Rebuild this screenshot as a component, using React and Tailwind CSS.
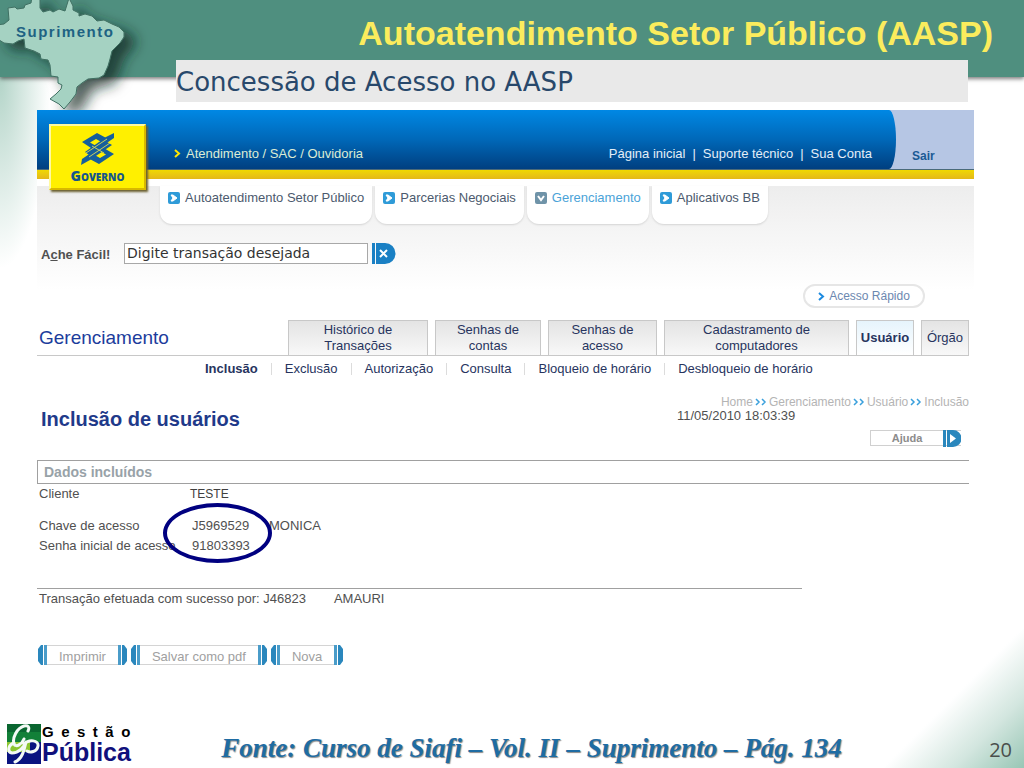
import { useState } from 'react';

const mainTabs = [
  { label: 'Autoatendimento Setor Público' },
  { label: 'Parcerias Negociais' },
  { label: 'Gerenciamento', active: true },
  { label: 'Aplicativos BB' },
];

const sectionTabs = [
  { label: 'Histórico de Transações', box: 'px-7' },
  { label: 'Senhas de contas', box: 'px-4' },
  { label: 'Senhas de acesso', box: 'px-4' },
  { label: 'Cadastramento de computadores', box: 'px-9' },
  { label: 'Usuário', box: 'px-0', active: true },
  { label: 'Órgão', box: 'px-0' },
];

const subMenu = ['Inclusão', 'Exclusão', 'Autorização', 'Consulta', 'Bloqueio de horário', 'Desbloqueio de horário'];

const breadcrumb = ['Home', 'Gerenciamento', 'Usuário', 'Inclusão'];

const actions = ['Imprimir', 'Salvar como pdf', 'Nova'];

function BrazilMap() {
  return (
    <svg width="170" height="112" viewBox="0 0 170 112" aria-hidden="true">
      <defs>
        <filter id="mapShadow" x="-20%" y="-20%" width="160%" height="150%">
          <feDropShadow dx="11" dy="7" stdDeviation="7" floodColor="#0c2620" floodOpacity="0.75" />
        </filter>
      </defs>
      <path
        d="M-4 25 L4 24 L9 20 L8 8 L15 7 L17 9 L24 8 L25 5 L31 3 L32 -4 L40 -4 L40 8 L43 12 L50 10 L53 12 L59 9 L65 11 L69 -2 L73 6 L73 10 L79 13 L79 16 L85 14 L92 16 L97 21 L104 20 L112 24 L119 27 L124 32 L124 37 L120 43 L112 51 L110 59 L108 66 L104 75 L99 78 L88 79 L82 83 L77 87 L76 94 L70 102 L64 109 L59 104 L50 99 L56 94 L61 89 L62 85 L58 83 L58 77 L51 76 L50 65 L48 60 L41 59 L40 54 L34 51 L25 48 L24 39 L18 41 L13 44 L4 43 L-4 38 Z"
        fill="#a5d2c2"
        stroke="#3f6f62"
        strokeWidth="1"
        filter="url(#mapShadow)"
      />
    </svg>
  );
}

function BankMark() {
  return (
    <svg width="36" height="34" viewBox="0 0 36 34" aria-hidden="true">
      <g fill="#155f9c">
        <path d="M2 10 L17 1 L30 8 L25 12 L16 7 L10 10.500 L18 15 L14 18 Z" />
        <path d="M34 1 L34 6 L9 23 L5 20 L26 5 Z" />
        <path d="M34 22 L19 32 L6 25 L11 21 L20 26 L26 22.500 L18 18 L22 15 Z" />
        <path d="M1 33 L2 27 L27 10 L32 13 L10 28 Z" />
      </g>
      <path d="M6 21 L27 7 M9 25 L30 11 M12 14 L24 21" stroke="#c8d060" strokeWidth="1" />
    </svg>
  );
}

function PublicManagementMark() {
  return (
    <svg width="34" height="40" viewBox="0 0 34 40" aria-hidden="true">
      <rect width="34" height="40" fill="#0a1480" />
      <path d="M0 0H34V18H0Z" fill="#128038" />
      <path d="M0 0H34V8H0Z" fill="#0a6630" />
      <path d="M0 18H23V28H0Z" fill="#8cc630" />
      <path
        d="M21 7C23 3 21 1 17 2C10 4 5 14 7 20C9 24 15 20 17 15M7 19C1 21 0 28 5 29C12 29 17 23 19 18M19 18C17 27 15 35 8 38M17 20C22 15 32 16 31 22C30 28 23 29 20 27"
        fill="none"
        stroke="#f4faf6"
        strokeWidth="3"
        strokeLinecap="round"
      />
    </svg>
  );
}

function TabBullet({ active }) {
  return (
    <svg width="12" height="12" viewBox="0 0 12 12" aria-hidden="true">
      <rect width="12" height="12" rx="2" fill={active ? '#6f93a8' : '#2f9bd8'} />
      {active ? (
        <path d="M3 4L6 8L9 4" fill="none" stroke="#fff" strokeWidth="2" />
      ) : (
        <path d="M3 3H5L9 6L5 9H3L5 6Z" fill="#fff" stroke="#fff" strokeWidth="1" />
      )}
    </svg>
  );
}

function Chevron({ color }) {
  return (
    <svg width="7" height="9" viewBox="0 0 7 9" aria-hidden="true">
      <path d="M1 1L5 4.500L1 8" fill="none" stroke={color} strokeWidth="2" />
    </svg>
  );
}

function DoubleChevron() {
  return (
    <svg width="12" height="8" viewBox="0 0 12 8" aria-hidden="true">
      <path d="M1 1L4 4L1 7M7 1L10 4L7 7" fill="none" stroke="#3aa0dc" strokeWidth="1.500" />
    </svg>
  );
}

function ButtonCap({ flip }) {
  return (
    <svg width="9" height="20" viewBox="0 0 9 20" className={flip ? 'rotate-180' : ''} aria-hidden="true">
      <path d="M5 0V20H3L0 16V4L3 0Z" fill="#2a87bd" />
      <path d="M6 0H9V20H6Z" fill="#4a9cc9" />
    </svg>
  );
}

function App() {
  const [search, setSearch] = useState('Digite transação desejada');

  return (
    <div className="relative flex min-h-screen flex-col overflow-hidden bg-white bg-[radial-gradient(ellipse_50px_190px_at_0_78px,#b3d4c8,transparent),linear-gradient(315deg,#98c6b5_0,#d3e6df_50px,#ffffff_100px)] font-['Liberation_Sans',Arial,sans-serif] text-[13px]">
      {/* Slide header */}
      <header className="flex h-[77px] shrink-0 justify-end bg-[#4f8f7f] pt-3 pr-[31px] shadow-[0_2px_4px_#00000080]">
        <h1 className="text-[34px] leading-[42px] font-bold text-[#fbec5d]">Autoatendimento Setor Público (AASP)</h1>
      </header>
      <div className="absolute top-0 left-0">
        <BrazilMap />
        <p className="absolute top-6 left-4 text-[15px] leading-4 font-bold tracking-widest text-[#1e6283]">Suprimento</p>
      </div>
      <h2 className="relative mr-14 ml-44 -mt-[17px] bg-[#e9e9e9] pt-0.5 font-['DejaVu_Sans',Verdana,sans-serif] text-[26px] leading-10 text-[#28486b]">
        Concessão de Acesso no AASP
      </h2>

      <main className="relative mt-2 mr-[50px] ml-[37px] bg-white text-[#505050]">
        {/* Bank banner */}
        <div className="relative">
          <div className="flex h-[60px] border-b border-[#4a6a7a] bg-[#b6c6e4]">
            <div className="flex grow items-center justify-between bg-linear-to-b from-[#0088e4] via-[#0068b8] to-[#003f80] pt-7 pr-6 pl-[137px] text-[#e4eef8] [border-radius:0_7px_7px_0/0_50%_50%_0]">
              <a href="#atendimento" className="flex items-center gap-[5px] text-[#dcecd4]">
                <Chevron color="#ffe600" />
                Atendimento / SAC / Ouvidoria
              </a>
              <nav className="flex gap-[7px]">
                <a href="#inicio">Página inicial</a>
                <span>|</span>
                <a href="#suporte">Suporte técnico</a>
                <span>|</span>
                <a href="#conta">Sua Conta</a>
              </nav>
            </div>
            <a href="#sair" className="w-[78px] pt-9 pl-4 text-[12px] leading-5 font-bold text-[#1a5a94]">Sair</a>
          </div>
          <div className="h-[9px] bg-linear-to-b from-[#f0d800] to-[#e4b818]" />
          <div className="absolute top-3.5 left-3 flex h-[66px] w-[97px] flex-col items-center gap-0.5 border-2 border-[#fff9a0] border-r-[#d8b800] border-b-[#d8b800] bg-[#fff000] pt-1.5 shadow-[2px_2px_2px_#6b6030]">
            <BankMark />
            <p className="font-['Open_Sans',sans-serif] text-[14px] leading-4 font-extrabold text-[#14568c] [font-variant:small-caps]">Governo</p>
          </div>
        </div>

        {/* Main tabs and search */}
        <div className="mt-[7px] bg-linear-to-b from-[#ededed] to-white to-[104px]">
          <nav className="flex gap-[3px] pl-[123px]">
            {mainTabs.map((tab) => (
              <a
                key={tab.label}
                href="#menu"
                className={`flex h-[38px] items-start gap-[5px] rounded-b-xl bg-white px-2 pt-1.5 leading-3 shadow-[0_1px_2px_#d4d4d4] ${tab.active ? 'text-[#4ba3d8]' : 'text-[#4c5a6e]'}`}
              >
                <TabBullet active={tab.active} />
                {tab.label}
              </a>
            ))}
          </nav>

          <form className="mt-[18px] flex h-[22px] items-center pl-1" onSubmit={(event) => event.preventDefault()}>
            <label htmlFor="busca" className="w-[83px] pt-1 font-bold">
              A<u>c</u>he Fácil!
            </label>
            <input
              id="busca"
              type="text"
              value={search}
              onChange={(event) => setSearch(event.target.value)}
              className="h-[21px] w-[244px] border border-[#a8a8a8] bg-white px-0.5 font-['DejaVu_Sans',Verdana,sans-serif] text-[14px] text-[#333333]"
            />
            <button type="submit" aria-label="Buscar" className="ml-1">
              <svg width="24" height="21" viewBox="0 0 24 21" aria-hidden="true">
                <path d="M0 0H3V21H0ZM4 0H13A10.500 10.500 0 0 1 13 21H4Z" fill="#1a80c4" />
                <path d="M8 7L15 14M15 7L8 14" stroke="#fff" strokeWidth="2" />
              </svg>
            </button>
          </form>

          <div className="mt-5 flex justify-end pr-[49px]">
            <button type="button" className="flex h-6 w-[122px] items-center justify-center gap-1 rounded-full border-2 border-[#e6e6e6] bg-white text-[12px] text-[#6c88b0]">
              <Chevron color="#1c8ae0" />
              Acesso Rápido
            </button>
          </div>
        </div>

        {/* Section tabs */}
        <div className="mt-3 mr-[5px] grid grid-cols-[244fr_140fr_106fr_109fr_185fr_58fr_48fr] gap-x-[7px] border-b border-[#c8c8c8] text-[#27345e]">
          <h2 className="pt-1 pl-0.5 text-[19px] leading-7 text-[#1c3c9c]">Gerenciamento</h2>
          {sectionTabs.map((tab) => (
            <a
              key={tab.label}
              href="#secao"
              className={`flex h-[35px] items-center justify-center border border-b-0 border-[#c8c8c8] text-center leading-4 ${tab.box} ${tab.active ? '-mb-px h-9 bg-linear-to-b from-[#e6f4fc] to-white font-bold' : 'bg-linear-to-b from-[#e4e4e4] to-[#f8f8f8]'}`}
            >
              {tab.label}
            </a>
          ))}
        </div>
        <ul className="flex h-[25px] items-center pl-[155px] text-[#27345e]">
          {subMenu.map((item, index) => (
            <li key={item} className={`px-[13px] leading-3 ${index === 0 ? 'font-bold' : 'border-l border-[#dcdcdc]'}`}>
              <a href="#submenu">{item}</a>
            </li>
          ))}
        </ul>

        {/* Page title, breadcrumb and help */}
        <section className="mr-[5px] flex justify-between pt-3.5">
          <h3 className="pt-2.5 pl-1 text-[20px] leading-7 font-bold text-[#1f3a8a]">Inclusão de usuários</h3>
          <div className="w-[292px] leading-[14px]">
            <ol className="flex items-center justify-end gap-0.5 text-[#b4b4b4]">
              {breadcrumb.map((item, index) => (
                <li key={item} className="flex items-center gap-0.5">
                  {index > 0 && <DoubleChevron />}
                  <a href="#trilha" className="text-[12px]">{item}</a>
                </li>
              ))}
            </ol>
            <p>11/05/2010 18:03:39</p>
            <button type="button" className="mt-[7px] mr-2 ml-auto flex h-4 w-[91px] items-center border border-r-0 border-[#d0d0d0] bg-white text-[11px] font-bold text-[#8c8c8c]">
              <span className="grow">Ajuda</span>
              <svg width="18" height="17" viewBox="0 0 18 17" className="shrink-0" aria-hidden="true">
                <path d="M0 0H3V17H0ZM4 0H10A8 8 0 0 1 10 17H4Z" fill="#2a87bd" />
                <path d="M7 4L13 8.500L7 13Z" fill="#fff" />
              </svg>
            </button>
          </div>
        </section>

        {/* Transaction result */}
        <h4 className="mt-3.5 mr-[5px] border border-r-0 border-[#a0a0a0] pl-1.5 text-[14px] leading-[22px] font-bold text-[#98a2a8]">
          Dados incluídos
        </h4>
        <div className="relative">
          <table className="text-left leading-5">
            <tbody>
              <tr>
                <th className="w-[153px] pl-0.5 font-normal">Cliente</th>
                <td className="text-[12px] text-[#404040]">TESTE</td>
              </tr>
              <tr>
                <th className="pt-3 pl-0.5 font-normal">Chave de acesso</th>
                <td className="w-[79px] pt-3 pl-0.5">J5969529</td>
                <td className="pt-3">MONICA</td>
              </tr>
              <tr>
                <th className="pl-0.5 font-normal">Senha inicial de acesso</th>
                <td className="pl-0.5">91803393</td>
              </tr>
            </tbody>
          </table>
          {/* Highlight around the generated key and password */}
          <div className="absolute top-[19px] left-[126px] h-[60px] w-[109px] rounded-[50%] border-4 border-[#000080]" />
        </div>
        <p className="mt-8 mr-[172px] border-t border-[#a0a0a0] pl-0.5 leading-5">
          Transação efetuada com sucesso por: J46823<span className="pl-7">AMAURI</span>
        </p>
        <div className="mt-9 flex gap-1 pl-px">
          {actions.map((action) => (
            <button key={action} type="button" className="flex h-5 items-center text-[#a0a0a0]">
              <ButtonCap />
              <span className="h-5 border-y border-[#d4d4d4] px-3 leading-[22px]">{action}</span>
              <ButtonCap flip />
            </button>
          ))}
        </div>
      </main>

      {/* Slide footer */}
      <footer className="relative mt-auto flex items-end pr-3 pb-1 pl-[7px]">
        <div className="flex gap-px">
          <PublicManagementMark />
          <div className="font-bold">
            <p className="text-[15px] leading-4 tracking-[0.5em] text-black">Gestão</p>
            <p className="text-[25px] leading-6 text-[#10107c]">Pública</p>
          </div>
        </div>
        <p className="grow text-center font-['Liberation_Serif','Times_New_Roman',serif] text-[27px] leading-8 font-bold text-[#1f6ca3] italic [text-shadow:1px_1px_1px_#8a8a8a]">
          Fonte: Curso de Siafi – Vol. II – Suprimento – Pág. 134
        </p>
        <p className="pl-16 font-['Open_Sans',sans-serif] text-[20px] leading-7 text-[#4a4f4c]">20</p>
      </footer>
    </div>
  );
}

export default App;
